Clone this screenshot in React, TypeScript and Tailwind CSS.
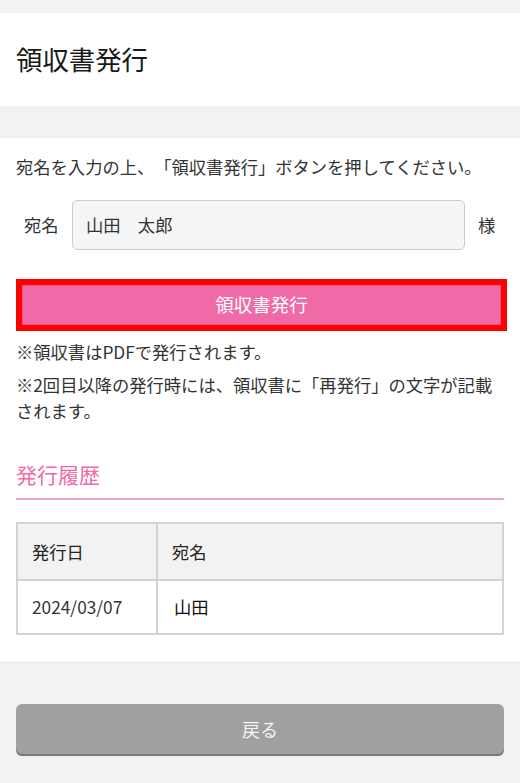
import React from 'react';

const font = { fontFamily: '"Noto Sans CJK JP", "Noto Sans", sans-serif' };

function History() {
  return (
    <table className="mt-[22px] w-full border-collapse text-[17.3px] text-[#333]">
      <thead>
        <tr className="h-[57px] bg-[#f2f2f2]">
          <th className="w-[140px] border-2 border-[#d3d3d3] pl-[14px] text-left font-normal text-[#222]">発行日</th>
          <th className="border-2 border-[#d3d3d3] pl-[14px] text-left font-normal text-[#222]">宛名</th>
        </tr>
      </thead>
      <tbody>
        <tr className="h-[54px] bg-white">
          <td className="border-2 border-[#d3d3d3] pl-[14px]">2024/03/07</td>
          <td className="border-2 border-[#d3d3d3] pl-[16px] text-[#111]">山田</td>
        </tr>
      </tbody>
    </table>
  );
}

export default function App() {
  return (
    <div className="min-h-[783px] bg-[#f2f2f2] pt-[13px] [text-spacing-trim:space-all]" style={font}>
      <header className="flex h-[93px] items-center bg-white px-4">
        <h1 className="text-[26.4px] leading-none text-[#1a1a1a]">領収書発行</h1>
      </header>

      <main className="mt-[32px] bg-white px-4 pt-4 pb-[27px]">
        <p className="text-[17.3px] leading-[26px] text-[#333]">
          宛名を入力の上、「領収書発行」ボタンを押してください。
        </p>

        <div className="mt-[20px] flex items-center text-[17.3px] text-[#333]">
          <label className="w-[56px] pl-2">宛名</label>
          <div className="flex h-[50px] flex-1 items-center rounded-[5px] border border-[#cccccc] bg-[#f5f5f5] px-[13px]">
            山田　太郎
          </div>
          <span className="w-[39px] pl-[13px]">様</span>
        </div>

        <div className="mt-[29px] w-[491px] border-[6px] border-[#ff0000]">
          <button className="flex h-[40px] w-full items-center justify-center border border-[#f4508f] bg-[#f06aa7] text-[18.5px] text-white">
            領収書発行
          </button>
        </div>

        <p className="mt-[8px] text-[17.3px] leading-[26px] text-[#333]">※領収書はPDFで発行されます。</p>
        <p className="mt-[7px] text-[17.3px] leading-[26px] text-[#333]">
          ※2回目以降の発行時には、領収書に「再発行」の文字が記載されます。
        </p>

        <h2 className="mt-[35px] border-b-2 border-[#f5a3c5] pb-[9px] text-[21px] leading-[30px] text-[#f06aa7]">
          発行履歴
        </h2>

        <History />
      </main>

      <footer className="border-t border-[#e6e6e6] px-4 pt-[41px] pb-[28px]">
        <button className="flex h-[52px] w-full items-center justify-center rounded-[6px] bg-[#a0a0a0] pb-[2px] text-[18px] text-[#f5f5f5] shadow-[inset_0_-2px_0_#7a7a7a]">
          戻る
        </button>
      </footer>
    </div>
  );
}
